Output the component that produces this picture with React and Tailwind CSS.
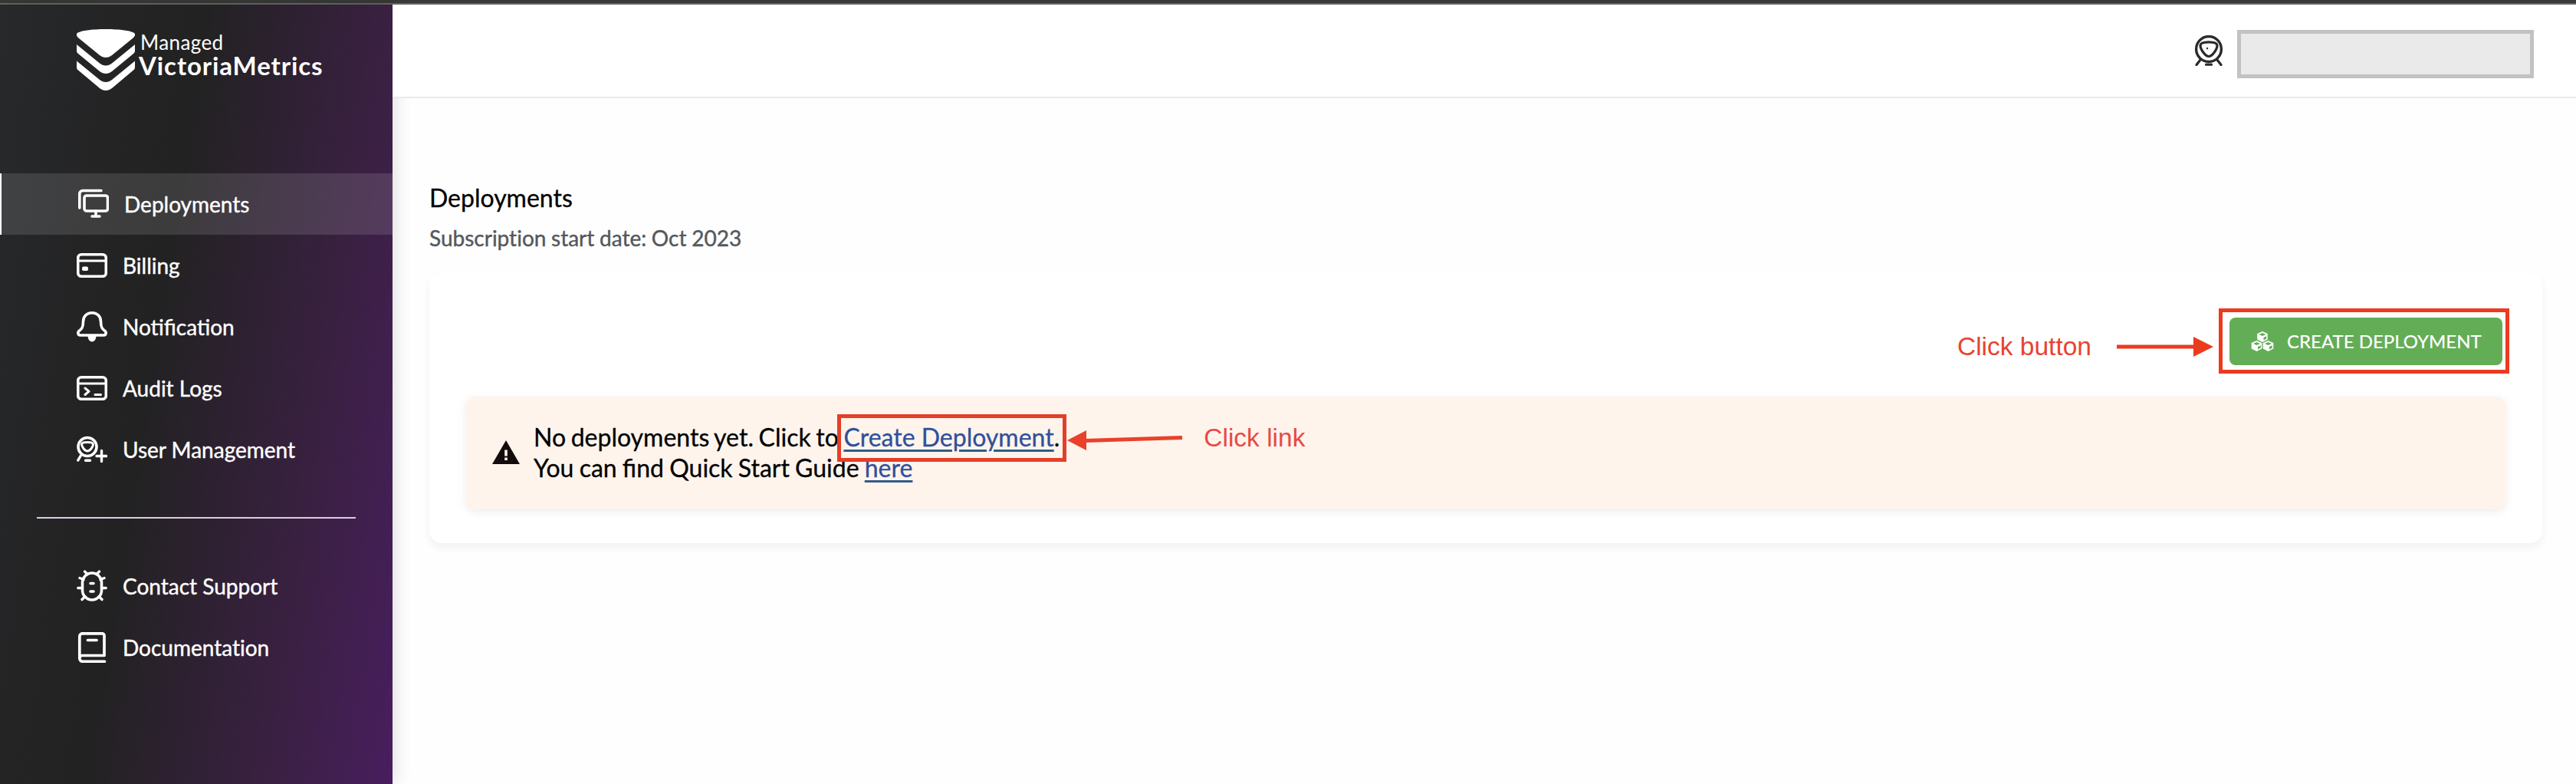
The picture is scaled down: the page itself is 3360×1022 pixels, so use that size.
const SIDEBAR_BG = "bg-[linear-gradient(99deg,#27292b_0%,#242425_24%,#222222_40%,#3a2042_76%,#481e5e_100%)]";

const stroke = {
  fill: "none",
  stroke: "currentColor",
  strokeWidth: 3.6,
  strokeLinecap: "round",
  strokeLinejoin: "round",
};

function ScreensIcon() {
  return (
    <svg width="40" height="40" viewBox="0 0 40 40" {...stroke}>
      <path d="M1.8 25V6.5a4 4 0 0 1 4-4H30" />
      <rect x="8" y="9" width="30.5" height="20" rx="3" />
      <path d="M23 29v6M18 36h10" />
    </svg>
  );
}

function CardIcon() {
  return (
    <svg width="40" height="40" viewBox="0 0 40 40" {...stroke}>
      <rect x="1.7" y="5.7" width="36.6" height="28.6" rx="4.5" />
      <path d="M2 14h36" strokeWidth="3" />
      <rect x="7" y="21.5" width="8" height="5.5" rx="2" fill="currentColor" stroke="none" />
    </svg>
  );
}

function BellIcon() {
  return (
    <svg width="40" height="40" viewBox="0 0 40 40" {...stroke}>
      <path d="M20 1.8c-7 0-11.500 5-11.500 11.500 0 8-2.200 9.800-5.500 12.200-2 1.500-1.300 5.500 1.500 5.500h31c2.800 0 3.500-4 1.500-5.500-3.300-2.400-5.500-4.200-5.500-12.200C31.500 6.800 27 1.800 20 1.800z" />
      <path d="M14.500 32h11a5.500 7.500 0 0 1-11 0z" fill="currentColor" stroke="none" />
    </svg>
  );
}

function ConsoleIcon() {
  return (
    <svg width="40" height="40" viewBox="0 0 40 40" {...stroke}>
      <rect x="1.700" y="5.700" width="36.600" height="28.600" rx="4.500" />
      <path d="M2 14h36" strokeWidth="3" />
      <path d="M11 20l5 4.200-5 4.300M24 28.500h7.500" strokeWidth="3" />
    </svg>
  );
}

function UserPlusIcon() {
  return (
    <svg width="40" height="40" viewBox="0 0 40 40" {...stroke}>
      <circle cx="14" cy="16.500" r="12" />
      <path d="M14 10.500c4 0 7.500.6 7.500 2.800 0 3-4 8.700-7.500 8.700s-7.500-5.700-7.500-8.700c0-2.200 3.500-2.800 7.500-2.800z" strokeWidth="3" />
      <path d="M5 28.500L1.800 34M11.500 34.300h6M26 28.500h13M32.500 21.500v14" strokeWidth="3.400" />
    </svg>
  );
}

function UserIcon() {
  return (
    <svg width="38" height="40" viewBox="0 0 38 40" {...stroke}>
      <circle cx="19" cy="18" r="16.400" strokeWidth="3.400" />
      <path d="M19 8.800c5.500 0 11 1 11 4.400 0 5-6.500 14.300-11 14.300S8 18.200 8 13.200c0-3.400 5.500-4.400 11-4.400z" strokeWidth="3.200" />
      <path d="M8 32l-5 6.500M30 32l5 6.500M15.500 38.200h7" strokeWidth="3.200" />
      <circle cx="17" cy="17" r="1.200" fill="currentColor" stroke="none" />
    </svg>
  );
}

function BugIcon() {
  return (
    <svg width="40" height="42" viewBox="0 0 40 42" {...stroke} strokeWidth="3.600">
      <rect x="7.500" y="4" width="25" height="35" rx="12.500" />
      <path d="M18 17.500h4M18 28h4" />
      <path d="M10.500 2l3.500 3.500M29.500 2L26 5.500M4 10.500l5 2M36 10.500l-5 2M1.800 23.500H7M38.200 23.500H33M7 38.500l4-4M33 38.500l-4-4" strokeWidth="3.400" />
    </svg>
  );
}

function BookIcon() {
  return (
    <svg width="40" height="40" viewBox="0 0 40 40" {...stroke} strokeWidth="3.700">
      <path d="M36 30.500V4.500a2.700 2.700 0 0 0-2.700-2.700H7.500A4 4 0 0 0 3.800 5.800v28.500a4 4 0 0 0 4 4H36.500M4 33.500c0-2 1.500-3 3.500-3H36" />
      <path d="M14.500 10.500H26" />
    </svg>
  );
}

function LogoIcon() {
  return (
    <svg width="76" height="80" viewBox="0 0 76 80" fill="currentColor">
      <path d="M0 6C3 2 20 0 38 0s35 2 38 6c.5 2-.5 4-3 6L46 34c-5 4-11 4-16 0L3 12C.5 10-.5 8 0 6z" />
      <path d="M0 20l30 24.500c5 4 11 4 16 0L76 20v8c0 2-.8 3-2 4L46 55c-5 4-11 4-16 0L2 32c-1.200-1-2-2-2-4z" />
      <path d="M0 41.500L30 66c5 4 11 4 16 0l30-24.500v8c0 2-.8 3-2 4L46 77c-5 4-11 4-16 0L2 53.500c-1.200-1-2-2-2-4z" />
    </svg>
  );
}

function CubesIcon() {
  const cubes = [[15, 0], [7.500, 12], [22.500, 12]];
  return (
    <svg width="30" height="26" viewBox="0 0 30 26">
      {cubes.map(([x, y]) => (
        <g key={`${x}-${y}`} transform={`translate(${x} ${y})`}>
          <path d="M0 0l6.800 3v7.500L0 14l-6.800-3.500V3z" fill="#fff" />
          <path d="M-4.500 4L0 2l4.500 2L0 6zM1.500 8l3.800-1.800v3.300l-3.800 2z" fill="#64ad57" />
        </g>
      ))}
    </svg>
  );
}

const mainNav = [
  { label: "Deployments", Icon: ScreensIcon, active: true },
  { label: "Billing", Icon: CardIcon },
  { label: "Notification", Icon: BellIcon },
  { label: "Audit Logs", Icon: ConsoleIcon },
  { label: "User Management", Icon: UserPlusIcon },
];

const helpNav = [
  { label: "Contact Support", Icon: BugIcon },
  { label: "Documentation", Icon: BookIcon, plainLigatures: true },
];

function NavItem({ label, Icon, active, plainLigatures }) {
  return (
    <a
      className={
        active
          ? "flex h-20 items-center gap-5 border-l-2 border-white bg-white/12 pl-[100px] text-white"
          : "flex h-20 items-center gap-5 pl-[100px] text-white"
      }
    >
      <Icon />
      <span
        className={
          plainLigatures
            ? "text-[28px] leading-10 whitespace-nowrap [-webkit-text-stroke:0.4px] [font-variant-ligatures:none]"
            : "text-[28px] leading-10 whitespace-nowrap [-webkit-text-stroke:0.4px]"
        }
      >
        {label}
      </span>
    </a>
  );
}

export default function App() {
  return (
    <div className="flex h-[1022px] w-[3360px] flex-col overflow-hidden bg-[#fefefe] font-['Lato',sans-serif]">
      <div className="h-1.5 shrink-0 border-b-2 border-[#666666] bg-[#383a37]" />
      <div className="flex min-h-0 flex-1">
        <aside className={`relative z-10 flex w-[512px] shrink-0 flex-col shadow-[0_0_24px_rgba(0,0,0,0.16)] ${SIDEBAR_BG}`}>
          <div className="flex h-[220px] items-start gap-[5px] pt-8 pl-[100px] text-white">
            <LogoIcon />
            <div className="flex flex-col">
              <span className="pt-px pl-[2px] text-[26px] leading-8 tracking-[0.4px]">Managed</span>
              <span className="-mt-0.5 text-[33px] leading-8 font-bold tracking-[0.9px]">VictoriaMetrics</span>
            </div>
          </div>
          <nav>
            {mainNav.map((item) => (
              <NavItem key={item.label} {...item} />
            ))}
          </nav>
          <hr className="mx-12 mt-12 mb-12 border-t-2 border-[#dccbe2]" />
          <nav>
            {helpNav.map((item) => (
              <NavItem key={item.label} {...item} />
            ))}
          </nav>
        </aside>

        <div className="flex flex-1 flex-col">
          <header className="relative z-20 flex h-[122px] items-start justify-end gap-[18px] border-b-2 border-[#eaeaea] bg-white pt-[33px] pr-[55px] text-[#2a2a2a]">
            <div className="pt-[7px]">
              <UserIcon />
            </div>
            <div className="h-[63px] w-[387px] border-5 border-[#c2c2c2] bg-[#eaeaea]" />
          </header>

          <main className="flex flex-col pt-[111px] pr-11 pl-12">
            <h1 className="text-[32px] leading-[38px] text-black [-webkit-text-stroke:0.3px]">Deployments</h1>
            <p className="mt-[15px] text-[28px] leading-9 [word-spacing:-0.5px] text-[#54585c] [-webkit-text-stroke:0.4px] [font-variant-ligatures:none]">
              Subscription start date: Oct 2023
            </p>

            <section className="mt-7 h-[352px] rounded-2xl bg-white px-12 pt-[46px] shadow-[0_6px_10px_rgba(90,90,120,0.07)]">
              <div className="-mr-[5px] flex items-start justify-end">
                <span className="mt-[30px] font-['Liberation_Sans',sans-serif] text-[33.5px] leading-10 text-[#e8432f]">
                  Click button
                </span>
                <svg className="mt-9 mr-[7px] ml-[33px]" width="126" height="28" viewBox="0 0 126 28">
                  <path d="M0 14h104" stroke="#ea3b1f" strokeWidth="5" />
                  <path d="M100 1l26 13-26 13z" fill="#ea3b1f" />
                </svg>
                <div className="flex h-[85px] w-[379px] items-start border-5 border-[#ea3b1f] bg-white pt-[7px] pl-[9px]">
                  <button className="flex h-[62px] w-[356px] items-center gap-[17px] rounded-lg bg-[#64ad57] pl-7 text-white">
                    <CubesIcon />
                    <span className="text-[24px] leading-8 whitespace-nowrap [-webkit-text-stroke:0.2px]">CREATE DEPLOYMENT</span>
                  </button>
                </div>
              </div>

              <div className="mt-[30px] flex h-[147px] rounded-xl bg-[#fef4ec] pl-[34px] shadow-[0_3px_12px_rgba(90,110,90,0.12)]">
                <svg className="mt-[57px]" width="36" height="31" viewBox="0 0 36 31">
                  <path d="M18 0l18 31H0z" fill="#140c0c" />
                  <path d="M16.200 12.500h3.600v8h-3.600zM16.200 22.500h3.600v3.600h-3.600z" fill="#fef4ec" />
                </svg>
                <div className="mt-[33px] ml-[18px] text-[32px] leading-10 whitespace-nowrap text-black [-webkit-text-stroke:0.3px]">
                  <p className="[word-spacing:-1.6px]">
                    No deployments yet. Click to{" "}
                    <span className="relative [word-spacing:0px]">
                      <a className="text-[#30509a] underline decoration-[#355b88] decoration-[3px] underline-offset-4">Create Deployment</a>.
                      <span className="absolute -top-[10px] -left-2 h-[62px] w-[299px] border-5 border-[#e43f29]" />
                    </span>
                  </p>
                  <p className="[word-spacing:-1px]">
                    You can find Quick Start Guide{" "}
                    <a className="text-[#30509a] underline decoration-[#355b88] decoration-[3px] underline-offset-4">here</a>
                  </p>
                </div>
                <svg className="mt-[43px] ml-[10px]" width="151" height="28" viewBox="0 0 151 28">
                  <path d="M22 14.500L150 10.500" stroke="#e9412b" strokeWidth="5" />
                  <path d="M0 14L25 1v26z" fill="#e9412b" />
                </svg>
                <span className="mt-[34px] ml-[27px] font-['Liberation_Sans',sans-serif] text-[33.5px] leading-10 text-[#e84a44]">
                  Click link
                </span>
              </div>
            </section>
          </main>
        </div>
      </div>
    </div>
  );
}
